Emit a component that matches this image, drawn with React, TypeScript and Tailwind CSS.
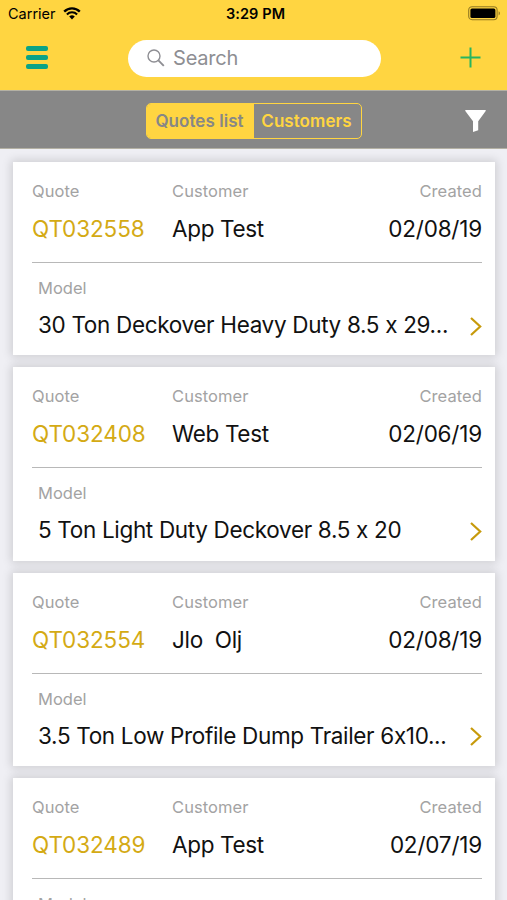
import React, { useState } from "react";
import clsx from "clsx";

interface QuoteI {
  id: string;
  customer: string;
  created: string;
  model: string;
}

const quotes: QuoteI[] = [
  {
    id: "QT032558",
    customer: "App Test",
    created: "02/08/19",
    model: "30 Ton Deckover Heavy Duty 8.5 x 29...",
  },
  {
    id: "QT032408",
    customer: "Web Test",
    created: "02/06/19",
    model: "5 Ton Light Duty Deckover 8.5 x 20",
  },
  {
    id: "QT032554",
    customer: "Jlo  Olj",
    created: "02/08/19",
    model: "3.5 Ton Low Profile Dump Trailer 6x10...",
  },
  {
    id: "QT032489",
    customer: "App Test",
    created: "02/07/19",
    model: "5 Ton Light Duty Deckover 8.5 x 20",
  },
];

const StatusBar = () => {
  return (
    <div className="flex h-[27px] items-center justify-between pl-2 pr-[6px] text-black">
      <div className="flex flex-1 items-center gap-[7px]">
        <p className="text-[14.5px]">Carrier</p>
        <svg width="18" height="13" viewBox="0 0 18 13" fill="none">
          <path d="M1.2 4.6a11 11 0 0 1 15.6 0" stroke="black" strokeWidth="2.3" />
          <path d="M3.9 7.4a7.2 7.2 0 0 1 10.2 0" stroke="black" strokeWidth="2.1" />
          <path d="M9 12.4 6.2 9.6a4 4 0 0 1 5.6 0Z" fill="black" />
        </svg>
      </div>
      <p className="pl-[2px] text-[14.5px] font-semibold tracking-[0.1px]">3:29 PM</p>
      <div className="flex flex-1 justify-end">
        <svg width="33" height="15" viewBox="0 0 33 15" fill="none">
          <rect x="0.7" y="0.7" width="28.4" height="13" rx="3.4" stroke="#947a22" strokeWidth="1.1" />
          <rect x="2.4" y="2.4" width="25" height="9.6" rx="1.6" fill="black" />
          <path d="M30.6 5.2c1.8.6 1.8 3.6 0 4.2Z" fill="#947a22" />
        </svg>
      </div>
    </div>
  );
};

const NavBar = () => {
  const [search, setSearch] = useState<string>("");

  return (
    <div className="flex h-[63px] items-start pl-[26px] pr-[26px] pt-[13px]">
      {/* Menu button */}
      <button className="flex h-[35px] flex-col justify-center gap-[3.6px]">
        <span className="h-[5px] w-[22px] rounded-[2px] bg-[#0aa386]" />
        <span className="h-[5px] w-[22px] rounded-[2px] bg-[#0aa386]" />
        <span className="h-[5px] w-[22px] rounded-[2px] bg-[#0aa386]" />
      </button>

      {/* Search field */}
      <div className="ml-[80px] flex h-[37px] w-[253px] items-center gap-[8px] rounded-full bg-white pl-[19px]">
        <svg width="18" height="18" viewBox="0 0 18 18" fill="none" className="mb-[1px] shrink-0">
          <circle cx="7" cy="7" r="6" stroke="#8e8e93" strokeWidth="1.4" />
          <path d="m11.4 11.4 5.4 5.4" stroke="#8e8e93" strokeWidth="1.9" />
        </svg>
        <input
          type="text"
          value={search}
          onChange={(e) => setSearch(e.target.value)}
          placeholder="Search"
          className="mb-[2px] w-[170px] bg-transparent text-[20px] tracking-[-0.2px] text-black outline-none placeholder:text-[#8e8e93]"
        />
      </div>

      {/* Add button */}
      <button className="ml-auto flex h-[35px] items-center">
        <svg width="21" height="21" viewBox="0 0 21 21">
          <path d="M10.5 0.5v20M0.5 10.5h20" stroke="#27b560" strokeWidth="2" />
        </svg>
      </button>
    </div>
  );
};

const tabs = ["Quotes list", "Customers"];

const FilterBar = () => {
  const [activeTab, setActiveTab] = useState<string>("Quotes list");

  return (
    <div className="flex h-[59px] items-center border-y border-[#b4b1a4] bg-[#878787] pl-[146px] pr-[21px] pt-[3px]">
      <div className="flex h-9 w-[216px] overflow-hidden rounded-[5px] border-[1.5px] border-[#ffd541]">
        {tabs.map((tab) => (
          <button
            key={tab}
            onClick={() => setActiveTab(tab)}
            className={clsx(
              "flex w-1/2 items-center justify-center whitespace-nowrap pr-[2px] pt-[2px] text-[17px] font-semibold tracking-[0.05px]",
              activeTab == tab ? "bg-[#ffd541] text-[#878787]" : "text-[#ffd541]"
            )}
          >
            {tab}
          </button>
        ))}
      </div>

      <svg width="21" height="22" viewBox="0 0 21 22" className="ml-auto">
        <path d="M0.3 0h20.4v1L13.2 11.2v9L8 22V11.2L0.3 1Z" fill="white" />
      </svg>
    </div>
  );
};

const QuoteCard = ({ data }: { data: QuoteI }) => {
  return (
    <div className="h-[193.3px] shrink-0 bg-white pl-[19px] pr-[13px] shadow-[0_0_9px_2px_rgba(0,0,0,0.14)]">
      {/* Top section */}
      <div className="flex h-[101px] border-b-[1.5px] border-[#b8b8b8] pt-[18px]">
        <div className="w-[140px]">
          <p className="text-[16.5px] leading-[22px] tracking-[0.08px] text-[#a3a3a3]">Quote</p>
          <p className="mt-[13px] text-[22.5px] leading-[28px] tracking-[-0.1px] text-[#d4aa14]">
            {data.id}
          </p>
        </div>
        <div className="flex-1">
          <p className="text-[16.5px] leading-[22px] tracking-[0.08px] text-[#a3a3a3]">Customer</p>
          <p className="mt-[13px] whitespace-pre text-[22.5px] leading-[28px] tracking-[-0.33px] text-[#111]">
            {data.customer}
          </p>
        </div>
        <div className="text-right">
          <p className="text-[16.5px] leading-[22px] tracking-[0.08px] text-[#a3a3a3]">Created</p>
          <p className="mt-[13px] text-[22.5px] leading-[28px] tracking-[-0.2px] text-[#111]">
            {data.created}
          </p>
        </div>
      </div>

      {/* Model section */}
      <div className="pl-[6px] pt-[14px]">
        <p className="text-[16.5px] leading-[22px] text-[#a3a3a3]">Model</p>
        <div className="mt-[12px] flex items-center justify-between">
          <p className="whitespace-nowrap text-[22.5px] leading-[28px] tracking-[-0.33px] text-[#111]">
            {data.model}
          </p>
          <svg width="12" height="19" viewBox="0 0 12 19" fill="none" className="mt-[2px] shrink-0">
            <path d="m1 1 9.2 8.5L1 18" stroke="#c79a0b" strokeWidth="2.2" />
          </svg>
        </div>
      </div>
    </div>
  );
};

const App = () => {
  return (
    <div className="flex h-[900px] w-[507px] flex-col overflow-hidden bg-[#efeff4] font-['Inter',sans-serif] [font-feature-settings:'calt'_0]">
      <div className="bg-[#ffd541]">
        <StatusBar />
        <NavBar />
      </div>
      <FilterBar />

      {/* Quotes */}
      <div className="flex flex-1 flex-col gap-3 overflow-hidden pl-[13px] pr-3 pt-[13px]">
        {quotes.map((data) => (
          <QuoteCard key={data.id} data={data} />
        ))}
      </div>
    </div>
  );
};

export default App;
